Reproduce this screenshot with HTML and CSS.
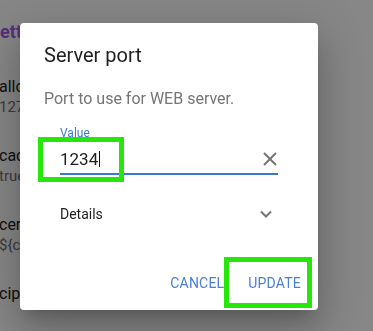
FILE: index.html
```html
<!DOCTYPE html>
<html>
<head>
<meta charset="utf-8">
<link rel="stylesheet" href="styles.css">
</head>
<body>
<div class="page">
  <div class="page-title">Settings</div>
  <div class="list">
    <div class="item"><div class="key">allowedHosts</div><div class="val">127.0.0.1</div></div>
    <div class="item"><div class="key">cacheEnabled</div><div class="val">true</div></div>
    <div class="item"><div class="key">certificate</div><div class="val">${config}/cert.pem</div></div>
    <div class="item"><div class="key">ciphers</div></div>
  </div>
</div>
<div class="scrim"></div>
<div class="dialog">
  <h2 class="title">Server port</h2>
  <p class="desc">Port to use for WEB server.</p>
  <div class="field">
    <div class="label">Value</div>
    <div class="input-row">
      <span class="input-text">1234<span class="caret"></span></span>
      <svg class="clear" width="14" height="14" viewBox="0 0 14 14"><path d="M1 1 L13 13 M13 1 L1 13" stroke="#757575" stroke-width="2" fill="none"/></svg>
    </div>
  </div>
  <div class="details">
    <span>Details</span>
    <svg class="chev" width="12" height="8" viewBox="0 0 12 8"><path d="M1 1.5 L6 6.5 L11 1.5" stroke="#757575" stroke-width="2" fill="none"/></svg>
  </div>
  <div class="actions">
    <button class="btn">CANCEL</button>
    <button class="btn">UPDATE</button>
  </div>
  <div class="hl hl-field"></div>
  <div class="hl hl-update"></div>
</div>
</body>
</html>
```
FILE: styles.css
```css
html, body {
  margin: 0;
  padding: 0;
  width: 373px;
  height: 331px;
  overflow: hidden;
  background: #ffffff;
  font-family: Roboto, "Liberation Sans", sans-serif;
}
.page {
  padding-top: 21px;
}
.page-title {
  margin-left: -11px;
  font-size: 18px;
  line-height: 22px;
  font-weight: 700;
  color: #a855e8;
}
.list {
  margin-top: 34px;
  margin-left: -1px;
  display: flex;
  flex-direction: column;
  gap: 29px;
}
.key {
  font-size: 16px;
  line-height: 20px;
  color: #222222;
}
.val {
  font-size: 15px;
  line-height: 20px;
  color: #707070;
}
.scrim {
  position: fixed;
  inset: 0;
  background: rgba(0, 0, 0, 0.47);
}
.dialog {
  position: absolute;
  left: 20px;
  top: 23px;
  width: 298px;
  box-sizing: border-box;
  padding: 16px 0 0 0;
  background: #ffffff;
  border-radius: 4px;
  box-shadow: 0 11px 15px -7px rgba(0,0,0,.2), 0 24px 38px 3px rgba(0,0,0,.14), 0 9px 46px 8px rgba(0,0,0,.12);
}
.title {
  margin: 0 24px;
  font-size: 20px;
  line-height: 32px;
  font-weight: 400;
  color: #212121;
}
.desc {
  margin: 16px 24px 0 24px;
  font-size: 16px;
  line-height: 24px;
  color: #757575;
}
.field {
  margin: 14px 40px 0 40px;
}
.label {
  font-size: 12px;
  line-height: 16px;
  color: #3f7bd4;
}
.input-row {
  margin-top: 6px;
  height: 26px;
  display: flex;
  align-items: center;
  justify-content: space-between;
  border-bottom: 2px solid #3a78d4;
}
.input-text {
  font-size: 17px;
  line-height: 24px;
  height: 24px;
  align-self: flex-start;
  color: #212121;
  display: flex;
  align-items: center;
}
.caret {
  display: inline-block;
  width: 1px;
  height: 16px;
  margin-left: 1px;
  background: #111111;
}
.clear {
  margin-right: 1px;
  margin-bottom: 2px;
}
.details {
  margin: 20px 40px 0 40px;
  height: 38px;
  display: flex;
  align-items: center;
  justify-content: space-between;
  padding-right: 6px;
  font-size: 14px;
  color: #212121;
}
.actions {
  margin-top: 24px;
  padding: 8px 9px 9px 8px;
  display: flex;
  justify-content: flex-end;
  gap: 8px;
}
.btn {
  height: 36px;
  padding: 0 8px;
  border: none;
  background: transparent;
  font-family: Roboto, "Liberation Sans", sans-serif;
  font-size: 14px;
  font-weight: 400;
  letter-spacing: 0.2px;
  color: #4a7fd4;
}
.hl {
  position: absolute;
  box-sizing: border-box;
  border: 5px solid #27e60a;
}
.hl-field {
  left: 18px;
  top: 114px;
  width: 86px;
  height: 45px;
}
.hl-update {
  left: 204px;
  top: 234px;
  width: 88px;
  height: 51px;
}
```
